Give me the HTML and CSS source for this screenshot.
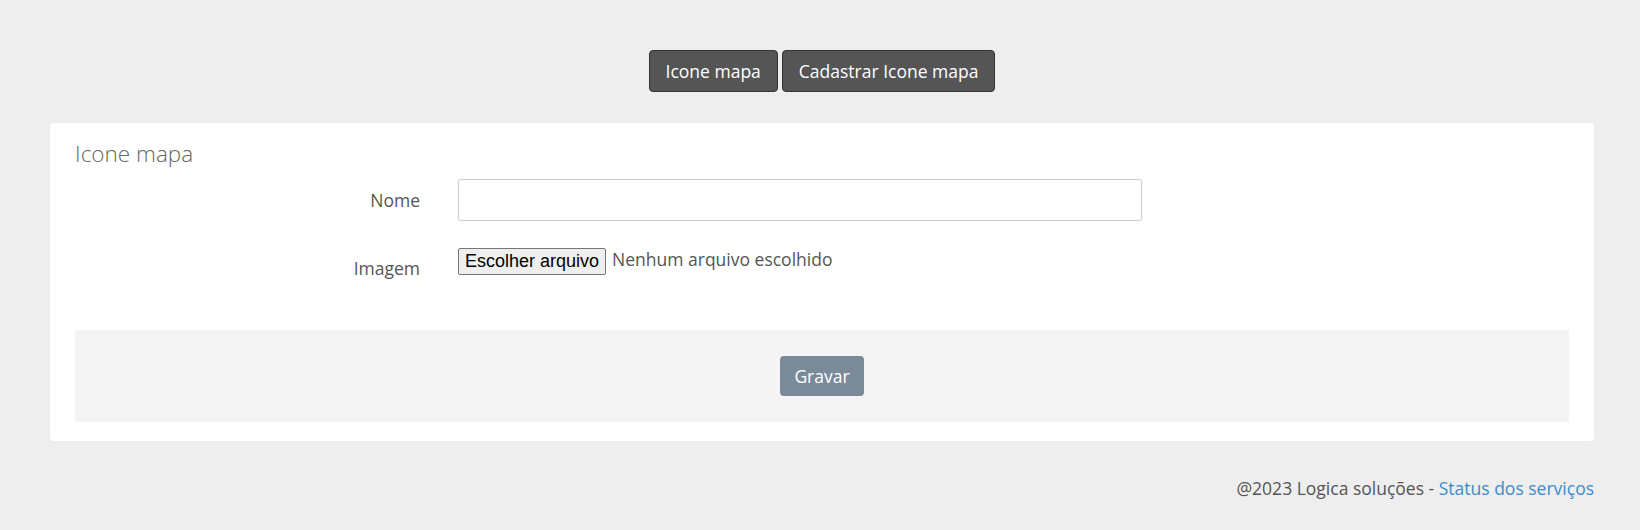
FILE: index.html
```html
<!DOCTYPE html>
<html lang="pt-BR">
<head>
<meta charset="utf-8">
<title>Icone mapa</title>
<link rel="stylesheet" href="styles.css">
</head>
<body>
<div class="page">
  <nav class="toolbar">
    <a class="tb-btn" href="#">Icone mapa</a>
    <a class="tb-btn" href="#">Cadastrar Icone mapa</a>
  </nav>
  <section class="card">
    <h2 class="card-title">Icone mapa</h2>
    <form class="form">
      <div class="form-row">
        <label class="form-label" for="nome">Nome</label>
        <input class="text-input" id="nome" type="text">
      </div>
      <div class="form-row form-row-file">
        <label class="form-label">Imagem</label>
        <div class="file-field">
          <button type="button" class="file-btn">Escolher arquivo</button>
          <span class="file-name">Nenhum arquivo escolhido</span>
        </div>
      </div>
      <div class="form-actions">
        <button type="button" class="save-btn">Gravar</button>
      </div>
    </form>
  </section>
  <footer class="footer">@2023 Logica soluções - <a href="#" class="footer-link">Status dos serviços</a></footer>
</div>
</body>
</html>
```

FILE: styles.css
```css
html, body {
  margin: 0;
  padding: 0;
  background: #eeeeee;
  font-family: "Open Sans", "Noto Sans", sans-serif;
  color: #555555;
}

.page {
  padding: 50px 46px 0 50px;
}

.toolbar {
  display: flex;
  justify-content: center;
  gap: 4px;
}

.tb-btn {
  display: inline-block;
  box-sizing: border-box;
  height: 42px;
  line-height: 40px;
  padding: 0 16px;
  background: #555555;
  border: 1px solid #333333;
  border-radius: 4px;
  color: #ffffff;
  font-size: 17.5px;
  text-decoration: none;
}

.card {
  margin-top: 31px;
  background: #ffffff;
  border-radius: 4px;
  padding: 16px 25px 19px;
}

.card-title {
  margin: 0;
  font-size: 22.5px;
  font-weight: 300;
  line-height: 30px;
  color: #666666;
}

.form-row {
  display: grid;
  grid-template-columns: 345px 684px;
  column-gap: 38px;
  align-items: center;
}

.form-row:first-child {
  margin-top: 10px;
}

.form-row-file {
  margin-top: 27px;
  align-items: start;
}

.form-label {
  text-align: right;
  font-size: 17.5px;
  line-height: 24px;
  color: #555555;
}

.form-row-file .form-label {
  padding-top: 8px;
}

.text-input {
  box-sizing: border-box;
  height: 42px;
  width: 684px;
  border: 1px solid #cccccc;
  border-radius: 3px;
  font-size: 16px;
  padding: 6px 12px;
  background: #ffffff;
}

.file-field {
  display: flex;
  align-items: center;
  gap: 6px;
}

.file-btn {
  box-sizing: border-box;
  height: 27px;
  padding: 0 6px;
  font-family: "Liberation Sans", Arial, sans-serif;
  font-size: 18px;
  color: #000000;
  background: #efefef;
  border: 1px solid #767676;
  border-radius: 2px;
}

.file-name {
  font-size: 17.5px;
  line-height: 24px;
  color: #555555;
  margin-top: -6px;
}

.form-actions {
  margin-top: 50px;
  background: #f4f4f4;
  padding: 26px 0;
  display: flex;
  justify-content: center;
}

.save-btn {
  box-sizing: border-box;
  height: 40px;
  width: 84px;
  border: none;
  border-radius: 4px;
  background: #7b8a99;
  color: #ffffff;
  font-family: "Open Sans", "Noto Sans", sans-serif;
  font-size: 17.5px;
}

.footer {
  margin-top: 35px;
  text-align: right;
  font-size: 17.5px;
  line-height: 24px;
  color: #555555;
}

.footer-link {
  color: #3a8dcc;
  text-decoration: none;
}
```
